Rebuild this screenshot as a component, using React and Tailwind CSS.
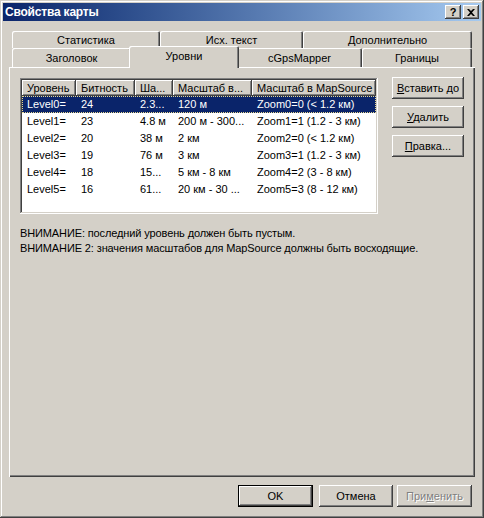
import React from 'react';

const raised =
  'shadow-[inset_-1px_-1px_#404040,inset_1px_1px_#ffffff,inset_-2px_-2px_#808080,inset_2px_2px_#d4d0c8]';
const headerCell =
  'shadow-[inset_-1px_-1px_#404040,inset_1px_1px_#ffffff,inset_-2px_-2px_#808080]';

const columns = [
  { title: 'Уровень', w: 'w-[54px]' },
  { title: 'Битность', w: 'w-[59px]' },
  { title: 'Ша...', w: 'w-[38px]' },
  { title: 'Масштаб в...', w: 'w-[79px]' },
  { title: 'Масштаб в MapSource', w: 'w-[124px]' },
];

const rows = [
  ['Level0=', '24', '2.3...', '120 м', 'Zoom0=0 (< 1.2 км)'],
  ['Level1=', '23', '4.8 м', '200 м - 300...', 'Zoom1=1 (1.2 - 3 км)'],
  ['Level2=', '20', '38 м', '2 км', 'Zoom2=0 (< 1.2 км)'],
  ['Level3=', '19', '76 м', '3 км', 'Zoom3=1 (1.2 - 3 км)'],
  ['Level4=', '18', '15...', '5 км - 8 км', 'Zoom4=2 (3 - 8 км)'],
  ['Level5=', '16', '61...', '20 км - 30 ...', 'Zoom5=3 (8 - 12 км)'],
];

function Tab({ label, w }) {
  return (
    <div
      className={`${w} h-full pt-[1px] flex items-center justify-center rounded-t-[2px] bg-[#d4d0c8] shadow-[inset_1px_1px_#ffffff,inset_-1px_0_#404040,inset_-2px_0_#808080]`}
    >
      {label}
    </div>
  );
}

function SideButton({ children }) {
  return (
    <button className={`w-[72px] h-[22px] flex items-center justify-center bg-[#d4d0c8] ${raised}`}>
      {children}
    </button>
  );
}

export default function App() {
  return (
    <div className="w-[484px] h-[518px] p-[3px] bg-[#d4d0c8] text-[11px] text-black font-['Liberation_Sans',Arial,sans-serif] shadow-[inset_-1px_-1px_#404040,inset_1px_1px_#d4d0c8,inset_-2px_-2px_#808080,inset_2px_2px_#ffffff] flex flex-col">
      {/* title bar */}
      <div className="h-[18px] flex items-center bg-gradient-to-r from-[#0a246a] to-[#a6caf0] pl-[2px] pr-[2px]">
        <span className="text-white font-bold text-[12px] leading-none tracking-[-0.2px]">Свойства карты</span>
        <div className="ml-auto flex gap-[2px]">
          <div className={`w-[16px] h-[14px] bg-[#d4d0c8] flex items-center justify-center font-bold text-[11px] leading-none ${raised}`}>
            ?
          </div>
          <div className={`w-[16px] h-[14px] bg-[#d4d0c8] flex items-center justify-center ${raised}`}>
            <svg width="8" height="7" viewBox="0 0 8 7">
              <path d="M0 0h2l2 2 2-2h2L5 3.5 8 7H6L4 5 2 7H0l3-3.5z" fill="#000" />
            </svg>
          </div>
        </div>
      </div>

      {/* tabs */}
      <div className="mt-[10px] mx-[9px] h-[17px] flex">
        <Tab label="Статистика" w="w-[148px]" />
        <Tab label="Исх. текст" w="w-[143px]" />
        <Tab label="Дополнительно" w="w-[169px]" />
      </div>
      <div className="mx-[9px] h-[19px] flex relative z-10">
        <Tab label="Заголовок" w="w-[119px]" />
        <div className="w-[110px] -mx-[2px] -mt-[2px] h-[22px] pb-[2px] flex items-center justify-center rounded-t-[2px] bg-[#d4d0c8] shadow-[inset_1px_1px_#ffffff,inset_-1px_0_#404040,inset_-2px_0_#808080] relative z-10">
          Уровни
        </div>
        <Tab label="cGpsMapper" w="w-[125px]" />
        <Tab label="Границы" w="w-[110px]" />
      </div>

      {/* panel */}
      <div className="mx-[6px] h-[410px] pt-[11px] pl-[11px] shadow-[inset_1px_1px_#ffffff,inset_-1px_-1px_#404040,inset_-2px_-2px_#808080]">
        <div className="flex gap-[14px]">
          <div className="w-[358px] h-[136px] bg-white p-[2px] shadow-[inset_-1px_-1px_#ffffff,inset_1px_1px_#808080,inset_-2px_-2px_#d4d0c8,inset_2px_2px_#404040]">
            <div className="flex h-[16px] bg-[#d4d0c8]">
              {columns.map((c) => (
                <div key={c.title} className={`${c.w} h-full pl-[5px] flex items-center whitespace-nowrap overflow-hidden ${headerCell}`}>
                  {c.title}
                </div>
              ))}
            </div>
            {rows.map((r, i) => (
              <div
                key={r[0]}
                className={`flex h-[17px] items-center ${
                  i === 0 ? 'bg-[#0a246a] text-white outline-1 outline-dotted -outline-offset-1 outline-[#e8d890]' : ''
                }`}
              >
                {r.map((cell, j) => (
                  <div key={j} className={`${columns[j].w} pl-[5px] whitespace-nowrap overflow-hidden`}>
                    {cell}
                  </div>
                ))}
              </div>
            ))}
          </div>
          <div className="flex flex-col gap-[7px] -mt-[1px]">
            <SideButton>
              <span><u>В</u>ставить до</span>
            </SideButton>
            <SideButton>
              <span><u>У</u>далить</span>
            </SideButton>
            <SideButton>
              <span><u>П</u>равка...</span>
            </SideButton>
          </div>
        </div>
        <div className="mt-[12px] leading-[15px] tracking-[-0.12px]">
          <div>ВНИМАНИЕ: последний уровень должен быть пустым.</div>
          <div>ВНИМАНИЕ 2: значения масштабов для MapSource должны быть восходящие.</div>
        </div>
      </div>

      {/* bottom buttons */}
      <div className="mt-[8px] flex justify-end pr-[9px]">
        <button className="w-[75px] h-[22px] bg-[#d4d0c8] border border-black shadow-[inset_-1px_-1px_#404040,inset_1px_1px_#ffffff,inset_-2px_-2px_#808080]">
          OK
        </button>
        <button className={`ml-[6px] w-[74px] h-[22px] bg-[#d4d0c8] ${raised}`}>Отмена</button>
        <button className={`ml-[4px] w-[75px] h-[22px] bg-[#d4d0c8] text-[#808080] [text-shadow:1px_1px_#ffffff] ${raised}`}>
          При<u>м</u>енить
        </button>
      </div>
    </div>
  );
}
